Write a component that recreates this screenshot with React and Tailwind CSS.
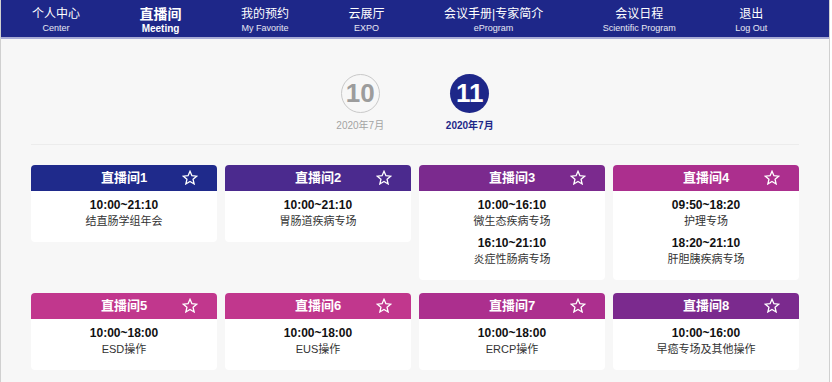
const font = {
  fontFamily: '"Liberation Sans", Arial, "Noto Sans CJK SC", sans-serif',
};

const navItems = [
  { cn: "个人中心", en: "Center" },
  { cn: "直播间", en: "Meeting", active: true },
  { cn: "我的预约", en: "My Favorite" },
  { cn: "云展厅", en: "EXPO" },
  { cn: "会议手册|专家简介", en: "eProgram" },
  { cn: "会议日程", en: "Scientific Program" },
  { cn: "退出", en: "Log Out" },
];

const rooms = [
  { name: "直播间1", bg: "bg-[#1f2a8b]", sessions: [["10:00~21:10", "结直肠学组年会"]] },
  { name: "直播间2", bg: "bg-[#4b2a8e]", sessions: [["10:00~21:10", "胃肠道疾病专场"]] },
  {
    name: "直播间3",
    bg: "bg-[#7b2a8e]",
    sessions: [
      ["10:00~16:10", "微生态疾病专场"],
      ["16:10~21:10", "炎症性肠病专场"],
    ],
  },
  {
    name: "直播间4",
    bg: "bg-[#ac2f8e]",
    sessions: [
      ["09:50~18:20", "护理专场"],
      ["18:20~21:10", "肝胆胰疾病专场"],
    ],
  },
  { name: "直播间5", bg: "bg-[#c1378d]", sessions: [["10:00~18:00", "ESD操作"]] },
  { name: "直播间6", bg: "bg-[#c1378d]", sessions: [["10:00~18:00", "EUS操作"]] },
  { name: "直播间7", bg: "bg-[#ac2f8e]", sessions: [["10:00~18:00", "ERCP操作"]] },
  { name: "直播间8", bg: "bg-[#7b2a8e]", sessions: [["10:00~16:00", "早癌专场及其他操作"]] },
];

const StarIcon = () => (
  <svg width="16" height="16" viewBox="0 0 24 24" fill="none">
    <polygon
      points="12,2 14.9,8.6 22,9.3 16.6,14 18.2,21 12,17.3 5.8,21 7.4,14 2,9.3 9.1,8.6"
      stroke="white"
      strokeWidth="2"
      strokeLinejoin="miter"
    />
  </svg>
);

const RoomCard = ({ room }) => (
  <div className="bg-white rounded-[4px] overflow-hidden">
    <div className={`${room.bg} h-[26px] grid grid-cols-[1fr_auto_1fr] items-center`}>
      <div />
      <span className="text-white text-[13px] font-bold leading-[26px]">{room.name}</span>
      <div className="flex justify-end pr-[19px]">
        <StarIcon />
      </div>
    </div>
    <div className="pt-[6px] pb-[13px] flex flex-col gap-[6px] text-center">
      {room.sessions.map(([time, title]) => (
        <div key={time}>
          <div className="text-[12px] leading-[16px] font-bold text-[#111]">{time}</div>
          <div className="text-[11px] leading-[16px] text-[#333]">{title}</div>
        </div>
      ))}
    </div>
  </div>
);

const App = () => {
  return (
    <div
      className="w-[830px] min-h-screen bg-[#f7f7f7] border-x border-[#d0d0d0]"
      style={font}
    >
      {/* NAV */}
      <div className="h-[39px] bg-[#1e2789] border-b-2 border-[#a9acd6] flex pl-[31px] gap-[59.5px]">
        {navItems.map((n) => (
          <a key={n.en} href="#" className="flex flex-col items-center pt-[6px] text-white">
            <span
              className={
                n.active
                  ? "text-[14px] leading-[16px] font-bold whitespace-nowrap"
                  : "text-[12px] leading-[16px] whitespace-nowrap"
              }
            >
              {n.cn}
            </span>
            <span
              className={
                n.active
                  ? "text-[10px] leading-[13px] font-bold whitespace-nowrap"
                  : "text-[9px] leading-[13px] whitespace-nowrap text-white/90"
              }
            >
              {n.en}
            </span>
          </a>
        ))}
      </div>

      {/* DATES */}
      <div className="w-[768px] mx-auto">
        <div className="flex justify-center gap-[49.5px] pt-[35px] pb-[11px] border-b border-[#ececec]">
          <div className="w-[60px] flex flex-col items-center">
            <div className="w-[39px] h-[39px] rounded-full border-[1.5px] border-[#c9c9c9] flex items-center justify-center text-[26px] font-bold text-[#9c9c9c]">
              10
            </div>
            <div className="mt-[6px] text-[10px] leading-[14px] text-[#a3a3a3] whitespace-nowrap">
              2020年7月
            </div>
          </div>
          <div className="w-[60px] flex flex-col items-center">
            <div className="w-[39px] h-[39px] rounded-full bg-[#1e2789] flex items-center justify-center text-[26px] font-bold text-white">
              11
            </div>
            <div className="mt-[6px] text-[10px] leading-[14px] font-bold text-[#1e2789] whitespace-nowrap">
              2020年7月
            </div>
          </div>
        </div>

        {/* ROOMS */}
        <div className="grid grid-cols-4 gap-x-[8px] gap-y-[13px] items-start pt-[20px] pb-[12px]">
          {rooms.map((r) => (
            <RoomCard key={r.name} room={r} />
          ))}
        </div>
      </div>
    </div>
  );
};

export default App;
